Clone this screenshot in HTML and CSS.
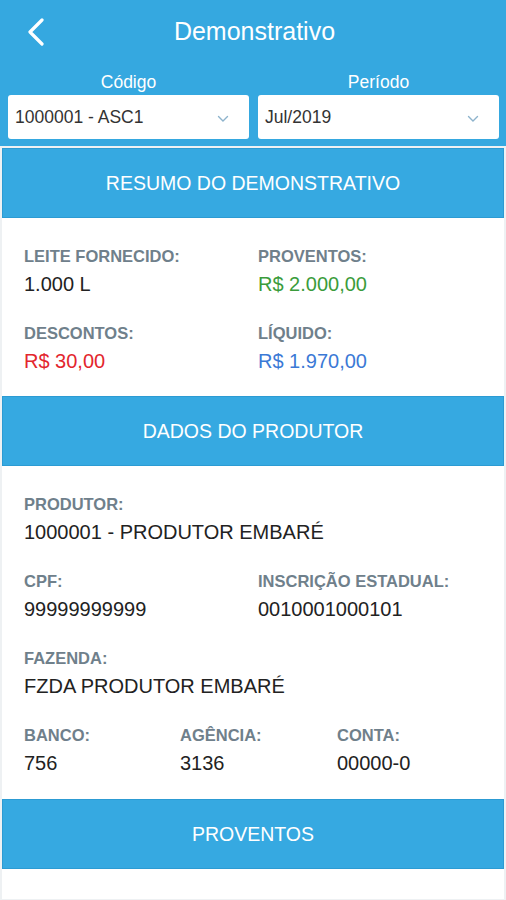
FILE: index.html
```html
<!DOCTYPE html>
<html lang="pt-BR">
<head>
<meta charset="utf-8">
<title>Demonstrativo</title>
<link rel="stylesheet" href="styles.css">
</head>
<body>
<header class="topbar">
  <div class="titlerow">
    <span class="back" aria-label="Voltar">
      <svg width="20" height="28" viewBox="0 0 20 28"><path d="M15 2 L3 14 L15 26" fill="none" stroke="#fff" stroke-width="3.2" stroke-linecap="round" stroke-linejoin="round"/></svg>
    </span>
    <h1 class="title">Demonstrativo</h1>
  </div>
  <div class="filters">
    <div class="filter">
      <div class="flabel">Código</div>
      <div class="select"><span>1000001 - ASC1</span>
        <svg class="chev" width="12" height="8" viewBox="0 0 12 8"><path d="M1.5 1.5 L6 6 L10.5 1.5" fill="none" stroke="#8db3cc" stroke-width="1.4" stroke-linecap="round"/></svg>
      </div>
    </div>
    <div class="filter">
      <div class="flabel">Período</div>
      <div class="select"><span>Jul/2019</span>
        <svg class="chev" width="12" height="8" viewBox="0 0 12 8"><path d="M1.5 1.5 L6 6 L10.5 1.5" fill="none" stroke="#8db3cc" stroke-width="1.4" stroke-linecap="round"/></svg>
      </div>
    </div>
  </div>
</header>

<main class="card">
  <section class="sec-resumo">
    <h2 class="shead">RESUMO DO DEMONSTRATIVO</h2>
    <div class="grid two">
      <div class="item"><div class="lbl">LEITE FORNECIDO:</div><div class="val">1.000 L</div></div>
      <div class="item"><div class="lbl">PROVENTOS:</div><div class="val green">R$ 2.000,00</div></div>
      <div class="item"><div class="lbl">DESCONTOS:</div><div class="val red">R$ 30,00</div></div>
      <div class="item"><div class="lbl">LÍQUIDO:</div><div class="val blue">R$ 1.970,00</div></div>
    </div>
  </section>
  <section class="sec-dados">
    <h2 class="shead">DADOS DO PRODUTOR</h2>
    <div class="grid two">
      <div class="item span2"><div class="lbl">PRODUTOR:</div><div class="val">1000001 - PRODUTOR EMBARÉ</div></div>
      <div class="item"><div class="lbl">CPF:</div><div class="val">99999999999</div></div>
      <div class="item"><div class="lbl">INSCRIÇÃO ESTADUAL:</div><div class="val">0010001000101</div></div>
      <div class="item span2"><div class="lbl">FAZENDA:</div><div class="val">FZDA PRODUTOR EMBARÉ</div></div>
    </div>
    <div class="grid three">
      <div class="item"><div class="lbl">BANCO:</div><div class="val">756</div></div>
      <div class="item"><div class="lbl">AGÊNCIA:</div><div class="val">3136</div></div>
      <div class="item"><div class="lbl">CONTA:</div><div class="val">00000-0</div></div>
    </div>
  </section>
  <section>
    <h2 class="shead">PROVENTOS</h2>
    <div class="tail"></div>
  </section>
</main>
</body>
</html>
```
FILE: styles.css
```css
* { box-sizing: border-box; }
html, body { margin: 0; padding: 0; }
body {
  width: 506px;
  height: 900px;
  overflow: hidden;
  background: #eef1f3;
  font-family: "Liberation Sans", Arial, sans-serif;
  color: #222;
}
.topbar {
  background: #35a8e0;
  padding: 0 7px 7px 8px;
}
.titlerow {
  position: relative;
  height: 62px;
  display: flex;
  align-items: center;
  justify-content: center;
}
.back {
  position: absolute;
  left: 19px;
  top: 18px;
  display: block;
  line-height: 0;
}
.title {
  margin: 0;
  font-weight: normal;
  font-size: 25px;
  color: #fff;
  padding-left: 2px;
}
.filters {
  display: grid;
  grid-template-columns: 241px 241px;
  gap: 9px;
  margin-top: 9px;
}
.flabel {
  text-align: center;
  color: #fff;
  font-size: 17.5px;
  line-height: 22px;
  margin-bottom: 2px;
}
.select {
  height: 44px;
  background: #fff;
  border-radius: 3px;
  display: flex;
  align-items: center;
  justify-content: space-between;
  padding: 0 20px 0 7px;
  font-size: 17.5px;
  color: #333;
}
.chev { margin-top: 3px; }
.card {
  background: #fff;
  margin: 2px 2px 0;
}
.shead {
  margin: 0;
  height: 70px;
  background: #36a9e1;
  border: 1px solid #2c9bd3;
  color: #fff;
  font-weight: normal;
  font-size: 19.5px;
  display: flex;
  align-items: center;
  justify-content: center;
}
.grid {
  display: grid;
  grid-template-columns: 234px 234px;
  padding-left: 22px;
  row-gap: 24px;
}
.shead + .grid { padding-top: 27px; }
.grid.two + .grid { padding-top: 24px; }
.grid.three { grid-template-columns: 156px 157px 156px; }
.sec-resumo > .grid:last-child { padding-bottom: 21px; }
.sec-dados > .grid:last-child { padding-bottom: 22px; }
.span2 { grid-column: span 2; }
.item { height: 53px; }
.lbl {
  font-size: 16.5px;
  font-weight: bold;
  color: #6f808b;
  line-height: 22px;
  margin-bottom: 3px;
}
.val {
  font-size: 20px;
  line-height: 28px;
  color: #222;
}
.val.green { color: #3b9c3b; }
.val.red { color: #e3262d; }
.val.blue { color: #3b79d6; }
.tail { height: 30px; }
```
